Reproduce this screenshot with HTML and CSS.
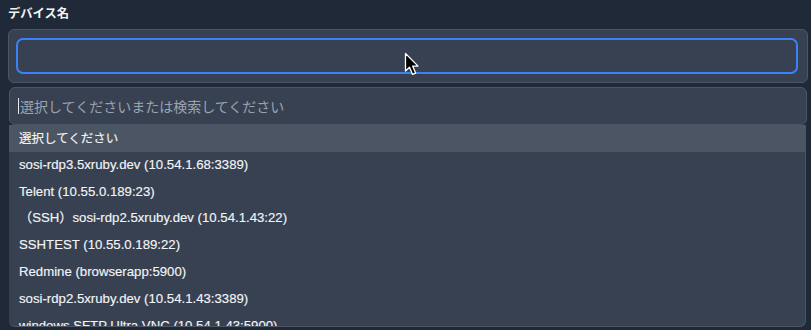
FILE: index.html
```html
<!DOCTYPE html>
<html lang="ja">
<head>
<meta charset="utf-8">
<link rel="stylesheet" href="styles.css">
</head>
<body>
<div class="page">
  <div class="label">デバイス名</div>
  <div class="select-box">
    <div class="select-inner"></div>
  </div>
  <div class="dropdown">
    <div class="search"><span class="caret"></span><span class="placeholder">選択してくださいまたは検索してください</span></div>
    <ul class="list">
      <li class="active">選択してください</li>
      <li>sosi-rdp3.5xruby.dev (10.54.1.68:3389)</li>
      <li>Telent (10.55.0.189:23)</li>
      <li>（SSH）sosi-rdp2.5xruby.dev (10.54.1.43:22)</li>
      <li>SSHTEST (10.55.0.189:22)</li>
      <li>Redmine (browserapp:5900)</li>
      <li>sosi-rdp2.5xruby.dev (10.54.1.43:3389)</li>
      <li>windows SFTP Ultra VNC (10.54.1.43:5900)</li>
    </ul>
  </div>
  <svg class="cursor" width="18" height="26" viewBox="0 0 18 26">
    <path d="M1.5 1.5 L1.5 19 L5.5 15.2 L8.6 22.4 L11.6 21.1 L8.6 14.1 L14 14.1 Z" fill="#000" stroke="#fff" stroke-width="1.3" stroke-linejoin="round"/>
  </svg>
</div>
</body>
</html>
```
FILE: styles.css
```css
html, body {
  margin: 0;
  padding: 0;
  background: #1f2937;
  overflow: hidden;
}
body {
  width: 811px;
  height: 330px;
  font-family: "Liberation Sans", "Noto Sans CJK JP", sans-serif;
  color: #f3f4f6;
}
.page {
  position: relative;
  padding: 5px 0 0 8px;
  width: 800px;
}
.label {
  font-family: "Noto Sans CJK JP", sans-serif;
  font-weight: 700;
  font-size: 12.3px;
  line-height: 16px;
  height: 16px;
  color: #f3f4f6;
  margin-bottom: 8px;
}
.select-box {
  box-sizing: border-box;
  width: 800px;
  height: 54px;
  background: #374151;
  border: 1px solid #4b5563;
  border-radius: 6px;
  padding: 8px 9px 0 7px;
}
.select-inner {
  box-sizing: border-box;
  height: 36px;
  border: 2px solid #3b82f6;
  border-radius: 7px;
}
.dropdown {
  margin: 4px 0 0 1px;
  width: 798px;
}
.search {
  box-sizing: border-box;
  height: 38px;
  background: #374151;
  border: 1px solid #4b5563;
  border-radius: 6px;
  display: flex;
  align-items: center;
  padding-left: 8px;
}
.caret {
  width: 1px;
  height: 16px;
  background: #e5e7eb;
}
.placeholder {
  font-family: "Noto Sans CJK JP", sans-serif;
  font-size: 14px;
  color: #9ca3af;
  margin-left: 1px;
}
.list {
  list-style: none;
  margin: 0;
  padding: 0;
  box-sizing: border-box;
  width: 797px;
  height: 202px;
  background: #374151;
  border: 1px solid #4b5563;
  border-top: none;
  border-left: none;
  border-radius: 0 0 6px 6px;
  overflow: hidden;
}
.list li {
  font-size: 13.2px;
  line-height: 14.8px;
  padding: 6px 10px;
  white-space: nowrap;
  color: #f3f4f6;
  -webkit-text-stroke: 0.15px #f3f4f6;
}
.list li.active {
  background: #4b5563;
  font-family: "Noto Sans CJK JP", sans-serif;
  font-size: 12.5px;
}
.cursor {
  position: absolute;
  left: 404px;
  top: 52px;
}
```
